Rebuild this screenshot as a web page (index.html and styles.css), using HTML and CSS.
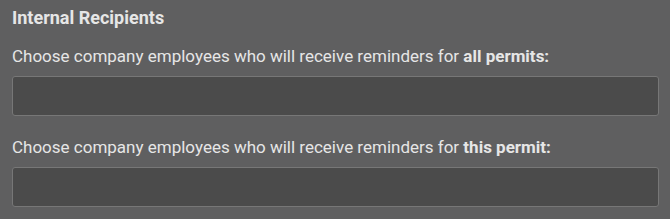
FILE: index.html
```html
<!DOCTYPE html>
<html lang="en">
<head>
    <meta charset="UTF-8">
    <meta name="viewport" content="width=device-width, initial-scale=1.0">
    <title>Internal Recipients</title>
    <link rel="stylesheet" href="styles.css">
</head>
<body>
    <div class="panel">
        <h3 class="panel-title">Internal Recipients</h3>
        <div class="form-group">
            <label for="allPermits">Choose company employees who will receive reminders for <strong>all permits:</strong></label>
            <input type="text" id="allPermits">
        </div>
        <div class="form-group">
            <label for="thisPermit">Choose company employees who will receive reminders for <strong>this permit:</strong></label>
            <input type="text" id="thisPermit">
        </div>
    </div>
</body>
</html>
```

FILE: styles.css
```css
body {
    margin: 0;
    background: #5f5f60;
    font-family: Roboto, "Liberation Sans", sans-serif;
    color: #e6e6e6;
}
.panel {
    padding: 7px 11px 0 12px;
}
.panel-title {
    margin: 0 0 17px 0;
    font-size: 18px;
    line-height: 22px;
    font-weight: bold;
}
.form-group {
    margin-bottom: 21px;
}
.form-group label {
    display: block;
    font-size: 17px;
    line-height: 20px;
    margin-bottom: 10px;
}
.form-group label strong {
    font-weight: bold;
}
.form-group input {
    display: block;
    box-sizing: border-box;
    width: 100%;
    height: 40px;
    margin: 0;
    padding: 0 10px;
    background: #4b4b4b;
    border: 1px solid #777;
    border-radius: 3px;
    color: #e6e6e6;
    font-family: inherit;
    font-size: 16px;
}
```
